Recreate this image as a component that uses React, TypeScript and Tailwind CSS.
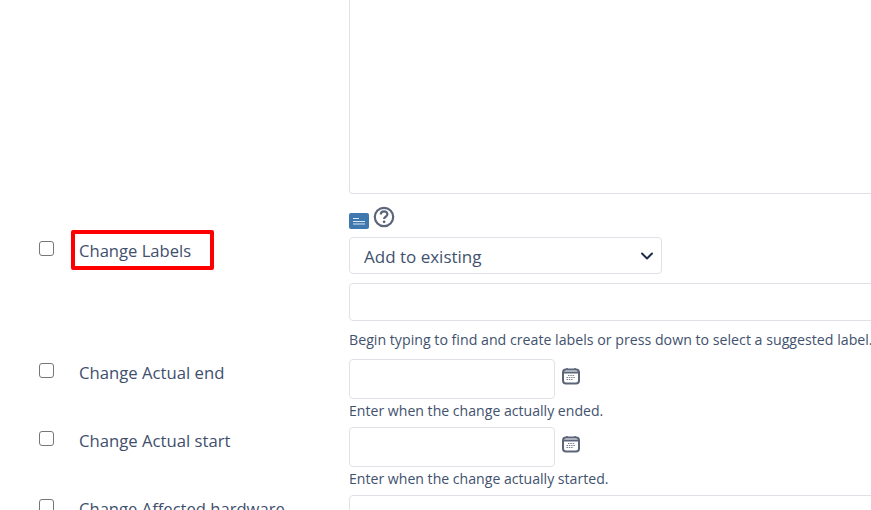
const font = "font-['Open_Sans','Noto_Sans',sans-serif]";

function Calendar() {
  return (
    <svg width="18" height="18" viewBox="0 0 18 18" fill="none" className="ml-[7px] mt-2 shrink-0">
      <rect x="1" y="2.5" width="16" height="14" rx="3" stroke="#5b6579" strokeWidth="2" />
      <path d="M1.5 5.5h15" stroke="#5b6579" strokeWidth="2" />
      <path d="M5 1v2M13 1v2" stroke="#5b6579" strokeWidth="1.5" />
      <path d="M6 8.5h7M4.5 10.5h9M4.5 12.5h7" stroke="#7a8394" strokeWidth="1" strokeDasharray="1.5 0.8" />
    </svg>
  );
}

function Check() {
  return <span className="block w-[15px] h-[15px] rounded-[3px] border border-[#767676] bg-white shrink-0" />;
}

function DateRow({ label, help }: { label: string; help: string }) {
  return (
    <div className="flex h-[68px]">
      <div className="w-[349px] flex pl-[39px] shrink-0">
        <div className="mt-1">
          <Check />
        </div>
        <span className="ml-[25px] mt-[3px] text-[16.7px] leading-[22px] text-[#3f4f6d]">{label}</span>
      </div>
      <div>
        <div className="flex">
          <div className="w-[206px] h-10 border border-[#dee2e6] rounded-[4px] bg-white" />
          <Calendar />
        </div>
        <p className="mt-[3px] text-[14.1px] leading-[18px] text-[#42526e] whitespace-nowrap">{help}</p>
      </div>
    </div>
  );
}

export default function App() {
  return (
    <div className={`${font} w-[871px] h-[510px] overflow-hidden bg-white`}>
      {/* description textarea, scrolled off the top */}
      <div className="pl-[349px] h-[207px]">
        <div className="w-[600px] h-[194px] border border-t-0 border-[#dee2e6] rounded-b-[4px]" />
      </div>

      <div className="flex h-[152px]">
        <div className="w-[349px] shrink-0 pl-[39px] flex items-start">
          <div className="mt-[34px]">
            <Check />
          </div>
          <div className="ml-[17px] mt-[23px] w-[143px] h-[40px] border-4 border-[#ff0000] rounded-[2px] flex items-center pl-[4px] pt-[2px]">
            <span className="text-[16.6px] leading-[22px] text-[#3f4f6d] whitespace-nowrap">Change Labels</span>
          </div>
        </div>
        <div className="w-[600px] shrink-0">
          <div className="flex items-start h-[30px]">
            <svg width="20" height="16" viewBox="0 0 20 16" className="mt-[6px]">
              <rect width="20" height="16" rx="2" fill="#3f78ae" />
              <path d="M4 5.5h6M4 8.5h12M4 11h12" stroke="#dbe7f2" strokeWidth="1.2" />
            </svg>
            <svg width="22" height="22" viewBox="0 0 22 22" fill="none" className="ml-[4px] -mt-px shrink-0">
              <circle cx="11" cy="11" r="9.2" stroke="#5b6579" strokeWidth="2.2" />
              <path d="M7.8 8.6c0-4.2 6.6-4.2 6.6-.3 0 2.5-3.3 2.4-3.3 4.6" stroke="#5b6579" strokeWidth="2.2" />
              <circle cx="11.1" cy="15.8" r="1.4" fill="#5b6579" />
            </svg>
          </div>
          <div className="w-[313px] h-[37px] border border-[#dee2e6] rounded-[4px] flex items-center justify-between pl-[14px] pr-[6px]">
            <span className="text-[17px] text-[#42526e] translate-y-px">Add to existing</span>
            <svg width="16" height="16" viewBox="0 0 16 16" fill="none">
              <path d="M3 5.5l5 5 5-5" stroke="#1f2d4d" strokeWidth="2" strokeLinecap="round" strokeLinejoin="round" />
            </svg>
          </div>
          <div className="mt-[9px] h-[38px] border border-[#dee2e6] rounded-[4px]" />
          <p className="mt-[10px] text-[14.2px] leading-[18px] text-[#42526e] whitespace-nowrap">
            Begin typing to find and create labels or press down to select a suggested label.
          </p>
        </div>
      </div>

      <DateRow label="Change Actual end" help="Enter when the change actually ended." />
      <DateRow label="Change Actual start" help="Enter when the change actually started." />

      <div className="flex">
        <div className="w-[349px] flex pl-[39px] shrink-0">
          <div className="mt-1">
            <Check />
          </div>
          <span className="ml-[25px] mt-[3px] text-[16.6px] leading-[22px] text-[#3f4f6d] whitespace-nowrap">
            Change Affected hardware
          </span>
        </div>
        <div className="w-[600px] h-10 shrink-0 border border-[#dee2e6] rounded-[4px]" />
      </div>
    </div>
  );
}
